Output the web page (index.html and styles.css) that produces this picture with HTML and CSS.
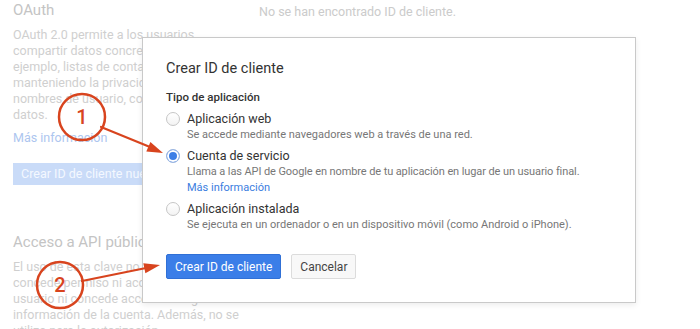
FILE: index.html
```html
<!DOCTYPE html>
<html lang="es">
<head>
<meta charset="utf-8">
<title>Crear ID de cliente</title>
<link rel="stylesheet" href="styles.css">
</head>
<body>
<div class="page">
  <section class="side">
    <h2 class="side-title">OAuth</h2>
    <p class="side-text">OAuth 2.0 permite a los usuarios<br>compartir datos concretos con tu (por<br>ejemplo, listas de contactos) y seguir<br>manteniendo la privacidad de sus<br>nombres de usuario, contraseñas y otros<br>datos.</p>
    <a class="side-link">Más información</a>
    <div class="side-btn">Crear ID de cliente nuevo</div>
    <h2 class="side-title api">Acceso a API pública</h2>
    <p class="side-text">El uso de esta clave no identifica al usuario,<br>concede permiso ni acceso a la cuenta del<br>usuario ni concede acceso a ninguna<br>información de la cuenta. Además, no se<br>utiliza para la autorización.</p>
  </section>
  <section class="main">
    <p class="empty">No se han encontrado ID de cliente.</p>
  </section>
</div>

<div class="dialog">
  <h3 class="dialog-title">Crear ID de cliente</h3>
  <div class="group-label">Tipo de aplicación</div>
  <div class="options">
    <div class="option">
      <span class="radio"></span>
      <div>
        <div class="opt-label">Aplicación web</div>
        <div class="opt-desc">Se accede mediante navegadores web a través de una red.</div>
      </div>
    </div>
    <div class="option">
      <span class="radio checked"></span>
      <div>
        <div class="opt-label">Cuenta de servicio</div>
        <div class="opt-desc narrow">Llama a las API de Google en nombre de tu aplicación en lugar de un usuario final.</div>
        <a class="opt-link">Más información</a>
      </div>
    </div>
    <div class="option">
      <span class="radio"></span>
      <div>
        <div class="opt-label">Aplicación instalada</div>
        <div class="opt-desc">Se ejecuta en un ordenador o en un dispositivo móvil (como Android o iPhone).</div>
      </div>
    </div>
  </div>
  <div class="actions">
    <button class="btn primary">Crear ID de cliente</button>
    <button class="btn">Cancelar</button>
  </div>
</div>

<svg class="annotations" width="700" height="329" viewBox="0 0 700 329">
  <g fill="none" stroke="#d8441e" stroke-width="2.5">
    <circle cx="82" cy="117" r="23"/>
    <circle cx="60" cy="285" r="23"/>
  </g>
  <g stroke="#d8441e" stroke-width="2.2" stroke-linecap="round">
    <line x1="101" y1="127" x2="150" y2="147"/>
    <line x1="82" y1="281" x2="146" y2="268"/>
  </g>
  <g fill="#d8441e">
    <polygon points="146.3,151.6 150.4,142 163,153"/>
    <polygon points="145.4,273.2 143.3,263.2 160,265"/>
  </g>
  <g fill="#d8441e" font-family="Roboto, 'Liberation Sans', sans-serif" font-size="20" font-weight="500" text-anchor="middle">
    <text x="82" y="124">1</text>
    <text x="60" y="292">2</text>
  </g>
</svg>
</body>
</html>
```

FILE: styles.css
```css
* { box-sizing: border-box; }

html, body {
  margin: 0;
  padding: 0;
  background: #fff;
  width: 700px;
  height: 329px;
  overflow: hidden;
  font-family: Roboto, "Liberation Sans", Arial, sans-serif;
}

.page {
  display: grid;
  grid-template-columns: 230px 1fr;
  column-gap: 16px;
  padding-left: 13px;
}

.side {
  display: flex;
  flex-direction: column;
  align-items: flex-start;
  white-space: nowrap;
}

.side-title {
  margin: 0;
  font-size: 15px;
  line-height: 20px;
  font-weight: 400;
  color: #c4c4c4;
}

.side-title.api {
  margin-top: 47px;
}

.side-text {
  margin: 7px 0 0;
  font-size: 12.5px;
  line-height: 16px;
  color: #cfcfcf;
}

.side-link {
  margin-top: 7px;
  font-size: 12.5px;
  line-height: 16px;
  color: #adc6ef;
}

.side-btn {
  margin-top: 17px;
  height: 22px;
  padding: 0 8px;
  width: 200px;
  background: #c9dbf8;
  color: #f4f8ff;
  font-size: 12.5px;
  line-height: 22px;
}

.main {
  padding-top: 4px;
}

.empty {
  margin: 0;
  font-size: 12.5px;
  line-height: 16px;
  color: #cbcbcb;
}

.dialog {
  position: absolute;
  left: 142px;
  top: 37px;
  width: 494px;
  height: 266px;
  background: #fff;
  border: 1px solid #c9c9c9;
  box-shadow: 0 2px 6px rgba(0, 0, 0, 0.08);
  padding: 22px 23px 0;
  color: #333;
}

.dialog-title {
  margin: 0;
  font-size: 14.5px;
  line-height: 18px;
  font-weight: 400;
  color: #333;
}

.group-label {
  margin-top: 11px;
  font-size: 11.5px;
  line-height: 16px;
  font-weight: 500;
  color: #333;
}

.options {
  margin-top: 5px;
  display: flex;
  flex-direction: column;
  gap: 4px;
}

.option {
  display: grid;
  grid-template-columns: 21px 1fr;
  align-items: start;
}

.radio {
  width: 14px;
  height: 14px;
  margin-top: 2px;
  border-radius: 50%;
  border: 1px solid #c6c6c6;
  background: linear-gradient(#fff, #f3f3f3);
}

.radio.checked {
  border-color: #9fb8e0;
  background: #3c7ee6;
  box-shadow: inset 0 0 0 2px #fff;
}

.opt-label {
  font-size: 12.5px;
  line-height: 17px;
  color: #333;
}

.opt-desc {
  font-size: 11px;
  line-height: 16px;
  color: #777;
}

.opt-desc.narrow {
  letter-spacing: -0.1px;
}

.opt-link {
  display: block;
  font-size: 11px;
  line-height: 16px;
  color: #3b7de0;
}

.actions {
  margin-top: 21px;
  display: flex;
  gap: 10px;
}

.btn {
  height: 25px;
  padding: 0 8px;
  border-radius: 2px;
  border: 1px solid #dcdcdc;
  background: #f8f8f8;
  color: #444;
  font-family: inherit;
  font-size: 12px;
}

.btn.primary {
  background: #3b7ee8;
  border-color: #3070d6;
  color: #fff;
}

.annotations {
  position: absolute;
  left: 0;
  top: 0;
  pointer-events: none;
}
```
